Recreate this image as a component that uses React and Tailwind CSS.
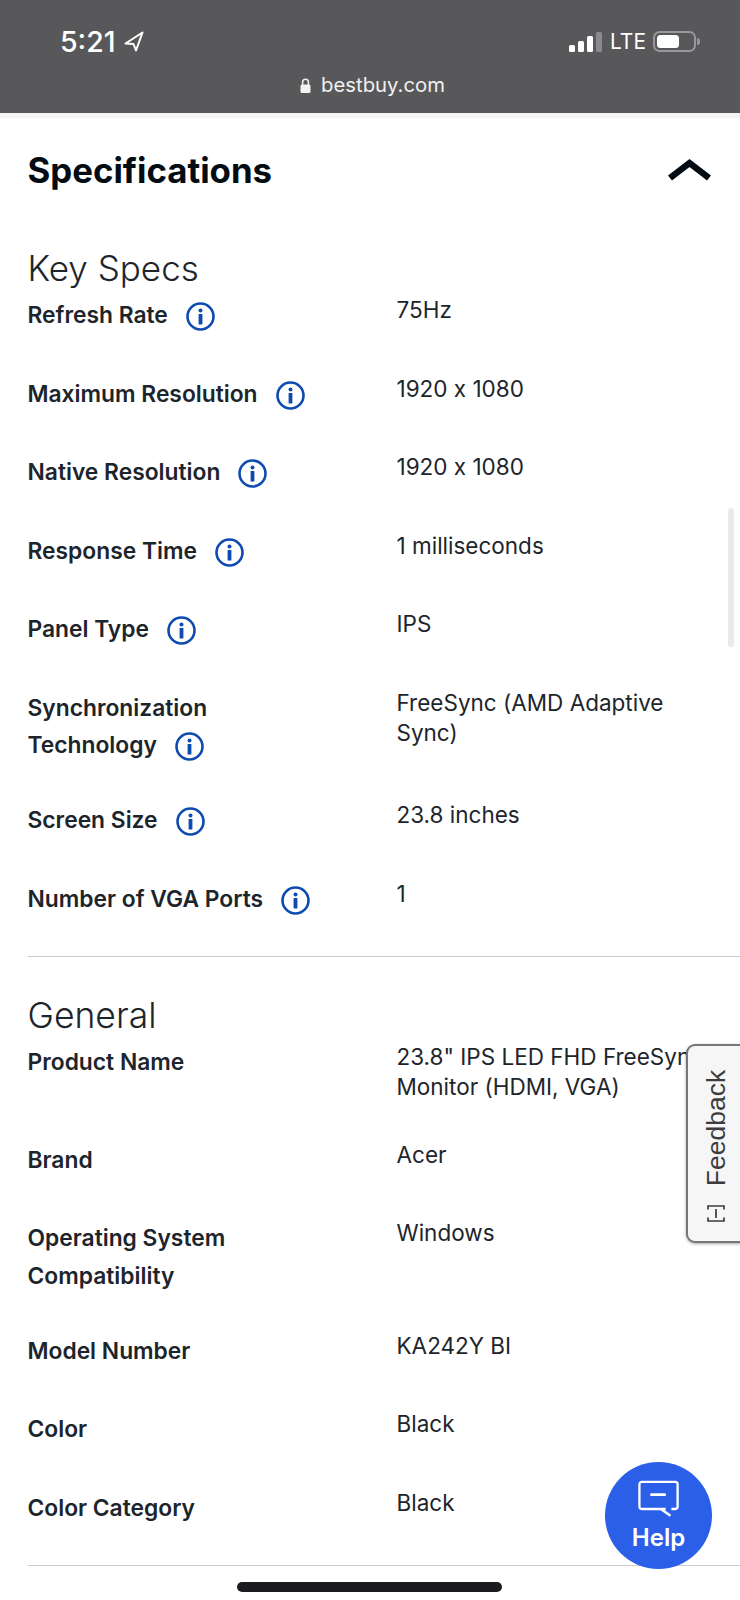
function InfoIcon() {
  return (
    <svg viewBox="0 0 29 29" className="inline-block w-[29px] h-[29px] ml-[18px] align-[-8px]">
      <circle cx="14.5" cy="14.5" r="13" fill="none" stroke="#0e4bb0" strokeWidth="2.6" />
      <circle cx="14.5" cy="8.4" r="2" fill="#0e4bb0" />
      <rect x="12.6" y="12" width="3.8" height="10.5" fill="#0e4bb0" />
    </svg>
  );
}

function Row({ label, value, info, h }) {
  return (
    <div className={`flex ${h}`}>
      <div className="w-[369px] shrink-0 text-[22.8px] font-semibold leading-[37.5px] text-[#1d252c] pr-[60px] pt-[4px]">
        {label}
        {info && <InfoIcon />}
      </div>
      <div className="w-[322px] shrink-0 text-[22.5px] font-normal leading-[30px] text-[#1d252c] pt-[3px] [font-feature-settings:'calt'_0]">{value}</div>
    </div>
  );
}

const keySpecs = [
  { label: "Refresh Rate", value: "75Hz", info: true, h: "h-[78.6px]" },
  { label: "Maximum Resolution", value: "1920 x 1080", info: true, h: "h-[78.6px]" },
  { label: "Native Resolution", value: "1920 x 1080", info: true, h: "h-[78.6px]" },
  { label: "Response Time", value: "1 milliseconds", info: true, h: "h-[78.6px]" },
  { label: "Panel Type", value: "IPS", info: true, h: "h-[78.6px]" },
  { label: "Synchronization Technology", value: "FreeSync (AMD Adaptive Sync)", info: true, h: "h-[112.4px]" },
  { label: "Screen Size", value: "23.8 inches", info: true, h: "h-[78.6px]" },
  { label: "Number of VGA Ports", value: "1", info: true, h: "h-[78.6px]" },
];

const general = [
  { label: "Product Name", value: '23.8" IPS LED FHD FreeSync Monitor (HDMI, VGA)', h: "h-[98px]" },
  { label: "Brand", value: "Acer", h: "h-[78.6px]" },
  { label: "Operating System Compatibility", value: "Windows", h: "h-[112.4px]" },
  { label: "Model Number", value: "KA242Y BI", h: "h-[78.6px]" },
  { label: "Color", value: "Black", h: "h-[78.6px]" },
  { label: "Color Category", value: "Black", h: "h-[80.6px]" },
];

export default function App() {
  return (
    <div className="relative w-[740px] h-[1600px] overflow-hidden bg-white font-['Inter',sans-serif]">
      <header className="h-[113px] bg-[#58585a] text-white">
        <div className="flex items-center justify-between pl-[60px] pr-[40px] pt-[21px] h-[62px]">
          <div className="flex items-center gap-[8px]">
            <span className="text-[28.5px] font-medium leading-[32px]">5:21</span>
            <svg viewBox="0 0 20 21" className="w-[20px] h-[21px]">
              <path d="M18.5 1.5 L1.5 12.5 L9.5 13 L12 19.5 Z" fill="none" stroke="white" strokeWidth="2" strokeLinejoin="round" />
            </svg>
          </div>
          <div className="flex items-center">
            <div className="flex items-end gap-[3px] h-[21px]">
              <span className="w-[6px] h-[7px] rounded-[1.5px] bg-white" />
              <span className="w-[6px] h-[11px] rounded-[1.5px] bg-white" />
              <span className="w-[6px] h-[16px] rounded-[1.5px] bg-white" />
              <span className="w-[6px] h-[20px] rounded-[1.5px] bg-[#8a8a8c]" />
            </div>
            <span className="ml-[8px] text-[21px] font-normal leading-[24px] w-[43px]">LTE</span>
            <div className="flex items-center">
              <div className="w-[43px] h-[21px] rounded-[6.5px] border-2 border-[#98989a] p-[2px]">
                <div className="w-[22px] h-full rounded-[3.5px] bg-white" />
              </div>
              <span className="ml-[1px] w-[3px] h-[7px] rounded-r-full bg-[#98989a]" />
            </div>
          </div>
        </div>
        <div className="flex items-center justify-center gap-[10px] pt-[10px] pl-[5px]">
          <svg viewBox="0 0 11 15" className="w-[11px] h-[15px]">
            <path d="M2.6 7V4.2a2.9 2.9 0 0 1 5.8 0V7" fill="none" stroke="#f2f2f2" strokeWidth="1.5" />
            <rect x="0.5" y="6.5" width="10" height="8.5" rx="1.5" fill="#f2f2f2" />
          </svg>
          <span className="text-[20.3px] leading-[26px] text-[#f0f0f0]">bestbuy.com</span>
        </div>
      </header>
      <div className="h-[5px] bg-[#f4f4f4]" />

      <main className="pl-[27.5px]">
        <div className="flex items-center justify-between h-[104px] pr-[28px]">
          <h1 className="text-[34.8px] font-bold leading-[42px] text-[#040c13]">Specifications</h1>
          <svg viewBox="0 0 45 23" className="w-[45px] h-[23px] -mt-[1px]">
            <path d="M3 20 L22.5 5 L42 20" fill="none" stroke="#040c13" strokeWidth="6.5" />
          </svg>
        </div>

        <section className="pt-[24px]">
          <h2 className="text-[35px] font-light leading-[44px] text-[#1d252c]">Key Specs</h2>
          <div className="pt-[2px]">
            {keySpecs.map((r) => <Row key={r.label} {...r} />)}
          </div>
        </section>

        <div className="border-t border-[#c9ccd2] mt-[1px]" />

        <section className="pt-[37px]">
          <h2 className="text-[35.5px] font-light leading-[44px] text-[#1d252c]">General</h2>
          <div className="pt-[1px]">
            {general.map((r) => <Row key={r.label} {...r} />)}
          </div>
        </section>

        <div className="border-t border-[#c9ccd2]" />
      </main>

      <div className="absolute left-[728px] top-[508px] w-[5.5px] h-[139px] rounded-full bg-[#eaeaea]" />

      <div className="absolute left-[686px] top-[1044px] w-[70px] h-[199px] rounded-[9px] border-2 border-[#77777a] bg-[#f6f6f6] shadow-[0_1px_3px_rgba(0,0,0,0.35)]">
        <div className="absolute left-[13px] top-[26px] h-[112px] w-[30px] flex items-center justify-center">
          <span className="-rotate-90 text-[26.5px] leading-[30px] text-[#3c3c3e] font-['Liberation_Sans',sans-serif]">Feedback</span>
        </div>
        <svg viewBox="0 0 18 17" className="absolute left-[19px] top-[159px] w-[18px] h-[17px]">
          <path d="M1 4.5 V1 H17 V4.5 M1 12.5 V16 H17 V12.5 M9 4 V13" fill="none" stroke="#3c3c3e" strokeWidth="1.7" />
        </svg>
      </div>

      <div className="absolute left-[605px] top-[1462px] w-[107px] h-[107px] rounded-full bg-[#2b5fe8] flex flex-col items-center text-white">
        <svg viewBox="0 0 44 38" className="w-[42px] h-[37px] mt-[18px]">
          <path d="M29 30 H4 a2.5 2.5 0 0 1 -2.5 -2.5 V4 a2.5 2.5 0 0 1 2.5 -2.5 H39 a2.5 2.5 0 0 1 2.5 2.5 V27.5 a2.5 2.5 0 0 1 -2.5 2.5 H35" fill="none" stroke="white" strokeWidth="2.4" />
          <path d="M24 30 L34 37" fill="none" stroke="white" strokeWidth="2.6" />
          <path d="M14 15 H28" fill="none" stroke="white" strokeWidth="2.8" strokeLinecap="round" />
        </svg>
        <span className="text-[24px] font-semibold leading-[28px] mt-[7px]">Help</span>
      </div>

      <div className="absolute left-[237px] top-[1582px] w-[265px] h-[10px] rounded-full bg-[#1c1c1e]" />
    </div>
  );
}
